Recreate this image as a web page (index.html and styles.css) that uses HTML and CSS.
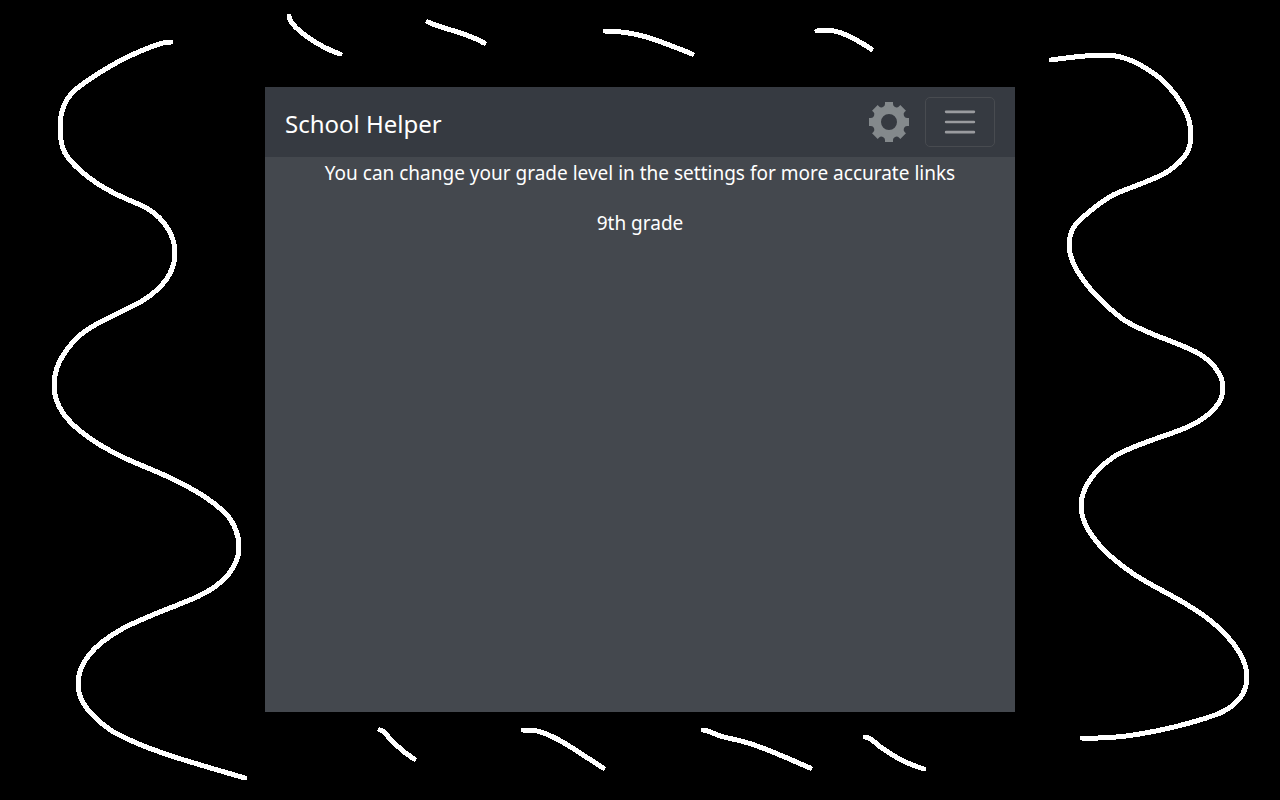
FILE: index.html
```html
<!DOCTYPE html>
<html lang="en">
<head>
<meta charset="utf-8">
<meta name="viewport" content="width=device-width, initial-scale=1">
<title>School Helper</title>
<link rel="stylesheet" href="styles.css">
</head>
<body>
<div class="stage">
  <svg class="doodles" viewBox="0 0 1280 800" aria-hidden="true">
    <path d="M171 42L163 43C135 51 100 70 75 90C65 99 60 113 60 128C60 140 62 151 69 159C85 178 108 192 136 203C162 213 175 234 175 253C175 272 163 288 142 301C118 315 94 322 77 338C61 354 54 370 54 385C54 406 67 422 88 437C116 457 140 464 164 475C195 489 212 500 225 513C234 522 239 535 239 547C239 568 222 585 199 596C170 609 146 616 122 629C95 644 78 662 78 684C78 702 91 717 112 731C145 750 190 762 245 778"/>
    <path d="M1051 60C1072 57 1087 55 1105 55C1126 55 1145 66 1161 79C1178 95 1191 115 1191 135C1191 150 1185 160 1167 172C1150 182 1130 187 1113 195C1099 203 1086 214 1076 224C1071 230 1069 238 1069 246C1070 268 1092 295 1121 318C1140 332 1172 340 1196 352C1213 361 1223 375 1223 388C1223 404 1210 416 1190 426C1168 436 1137 443 1115 456C1095 469 1081 488 1081 506C1081 530 1105 555 1135 575C1160 591 1190 603 1212 622C1234 640 1247 660 1247 677C1247 695 1236 706 1218 714C1182 727 1130 738 1098 738H1082"/>
    <path d="M289 16C290 27 317 46 340 54"/>
    <path d="M428 22C445 30 463 31 484 43"/>
    <path d="M605 31C635 31 655 39 692 54"/>
    <path d="M817 31C835 27 853 37 871 49"/>
    <path d="M380 730L383 731C392 741 400 750 414 759"/>
    <path d="M523 730H532C553 733 575 750 603 768"/>
    <path d="M703 730C712 731 715 736 728 738C755 743 780 755 810 768"/>
    <path d="M865 737C872 737 876 745 885 750C897 758 905 763 924 769"/>
  </svg>
  <div class="popup">
    <header class="navbar">
      <h1 class="brand">School Helper</h1>
      <div class="actions">
        <button class="settings" type="button" aria-label="Settings">
          <svg class="gear" viewBox="-20 -20 40 40" aria-hidden="true">
            <defs><path id="tooth" d="M-4 -20H4V-18Q4 -16 6 -15V-13H-6V-15Q-4 -16 -4 -18Z"/></defs>
            <circle class="ring" r="12"/>
            <use href="#tooth"/>
            <use href="#tooth" transform="rotate(45)"/>
            <use href="#tooth" transform="rotate(90)"/>
            <use href="#tooth" transform="rotate(135)"/>
            <use href="#tooth" transform="rotate(180)"/>
            <use href="#tooth" transform="rotate(225)"/>
            <use href="#tooth" transform="rotate(270)"/>
            <use href="#tooth" transform="rotate(315)"/>
          </svg>
        </button>
        <button class="toggler" type="button" aria-label="Toggle navigation">
          <svg class="bars" viewBox="0 0 30 30" aria-hidden="true">
            <path d="M4 7h22M4 15h22M4 23h22"/>
          </svg>
        </button>
      </div>
    </header>
    <main class="content">
      <p>You can change your grade level in the settings for more accurate links</p>
      <p>9th grade</p>
    </main>
  </div>
</div>
</body>
</html>
```
FILE: styles.css
```css
* {
  box-sizing: border-box;
}

body {
  margin: 0;
  background: #000;
  color: #fff;
  font-family: "Segoe UI", "Noto Sans", "Open Sans", sans-serif;
}

.stage {
  display: grid;
  grid-template-columns: minmax(0, 1fr);
  min-height: 100vh;
  place-items: center;
}

.doodles,
.popup {
  grid-area: 1 / 1;
}

.doodles {
  width: 100%;
  height: 100%;
  max-height: 100vh;
  fill: none;
  stroke: #fff;
  stroke-width: 5;
  stroke-linecap: round;
  stroke-linejoin: round;
  shape-rendering: crispEdges;
}

.popup {
  width: 100%;
  max-width: 750px;
  min-height: 625px;
  margin-bottom: 1px;
  background: #44484e;
}

.navbar {
  display: flex;
  align-items: center;
  justify-content: space-between;
  padding: 10px 20px;
  background: #363a41;
}

.brand {
  margin: 0;
  padding-top: 4px;
  font-size: 24px;
  font-weight: 400;
  line-height: 38px;
}

.actions {
  display: flex;
  align-items: center;
  gap: 16px;
}

.settings,
.toggler {
  display: flex;
  align-items: center;
  justify-content: center;
  padding: 0;
  border: 0;
  background: transparent;
  cursor: pointer;
}

.gear {
  width: 40px;
  height: 40px;
  fill: #84898c;
}

.ring {
  fill: none;
  stroke: #84898c;
  stroke-width: 8;
}

.toggler {
  width: 70px;
  height: 50px;
  border: 1px solid #484b50;
  border-radius: 5px;
}

.bars {
  width: 38px;
  height: 38px;
  fill: none;
  stroke: #9a9b9f;
  stroke-width: 2;
  stroke-linecap: round;
}

.content {
  padding-top: 1px;
  text-align: center;
  font-size: 19px;
  line-height: 30px;
}

.content p {
  margin: 0 0 20px;
}
```
